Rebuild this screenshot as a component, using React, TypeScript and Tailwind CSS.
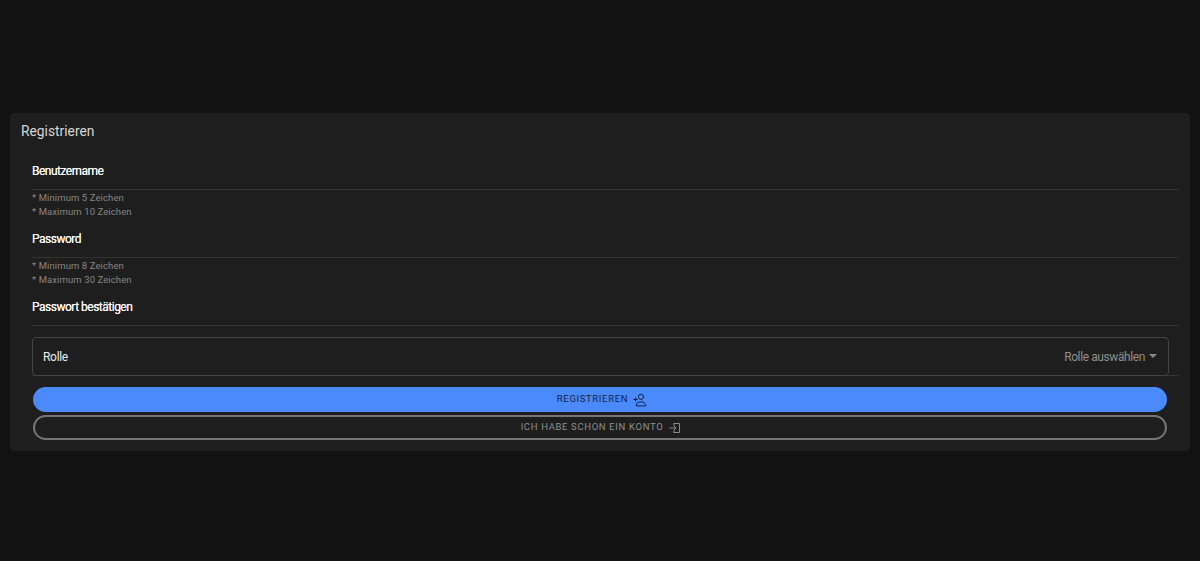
import React from "react";

function Field({ label }: { label: string }) {
  return (
    <div className="h-[38px] flex items-center border-b border-[#333333] text-[12px] tracking-[-0.5px] text-[#f8f8f8] pt-[1px] [text-shadow:0_0_0.4px_#f8f8f8]">
      {label}
    </div>
  );
}

function Hints({ items }: { items: string[] }) {
  return (
    <div className="h-[30px] pt-[0.6px] text-[9.5px] tracking-[0.1px] leading-[14px] text-[#868686]">
      {items.map((t) => (
        <div key={t}>{t}</div>
      ))}
    </div>
  );
}

export default function App() {
  return (
    <div className="h-[561px] bg-[#121212] px-[10px] pt-[113px] font-['Roboto',sans-serif]">
      <div className="h-[338px] rounded-[4px] bg-[#1e1e1e] pl-[11px] pr-[11px]">
        <div className="h-[39px] flex items-center pb-[2px] text-[13.8px] text-[#d6d6d6]">Registrieren</div>
        <div className="pl-[11px]">
          <Field label="Benutzername" />
          <Hints items={["* Minimum 5 Zeichen", "* Maximum 10 Zeichen"]} />
          <Field label="Password" />
          <Hints items={["* Minimum 8 Zeichen", "* Maximum 30 Zeichen"]} />
          <Field label="Passwort bestätigen" />
          <div className="pt-[11px] border-b border-[#333333] h-[50px]">
            <div className="h-[39px] w-[1137px] rounded-[4px] border border-[#444444] flex items-center justify-between pl-[10px] pr-[10px]">
              <span className="text-[12px] tracking-[-0.3px] text-[#eeeeee]">Rolle</span>
              <span className="flex items-center gap-[3px] text-[12px] tracking-[-0.4px] text-[#8f8f8f]">
                Rolle auswählen
                <svg width="10" height="6" viewBox="0 0 10 6" className="mb-[2px]"><path d="M1 1h8L5 5z" fill="#8a8a8a" /></svg>
              </span>
            </div>
          </div>
          <div className="w-[1134px] ml-[1px] mt-[11px] flex flex-col gap-[3px]">
            <button className="h-[25px] pl-[4px] rounded-full bg-[#4a8afc] flex items-center justify-center gap-[5px] text-[9.5px] tracking-[0.65px] text-[#14233d]">
              REGISTRIEREN
              <svg width="14" height="14" viewBox="0 0 14 14" fill="none" stroke="#14233d" strokeWidth="1" strokeLinecap="round">
                <circle cx="8" cy="3.8" r="2.600" />
                <path d="M3.200 12.500c0-2.300 1.800-3.600 4.800-3.600s4.800 1.300 4.800 3.600z" />
                <path d="M.8 6.500h3.400M2.500 4.800v3.400" />
              </svg>
            </button>
            <button className="h-[25px] pl-[2px] rounded-full border-2 border-[#757575] flex items-center justify-center gap-[6px] text-[9.5px] tracking-[0.65px] text-[#8f8f8f]">
              ICH HABE SCHON EIN KONTO
              <svg width="12" height="12" viewBox="0 0 12 12" fill="none" stroke="#8a8a8a" strokeWidth="1" strokeLinecap="round" strokeLinejoin="round">
                <path d="M5 1.500h5.500v9H5M5 1.500v2M5 10.500v-2" />
                <path d="M.8 6h6M5 4l2 2-2 2" />
              </svg>
            </button>
          </div>
        </div>
      </div>
    </div>
  );
}
